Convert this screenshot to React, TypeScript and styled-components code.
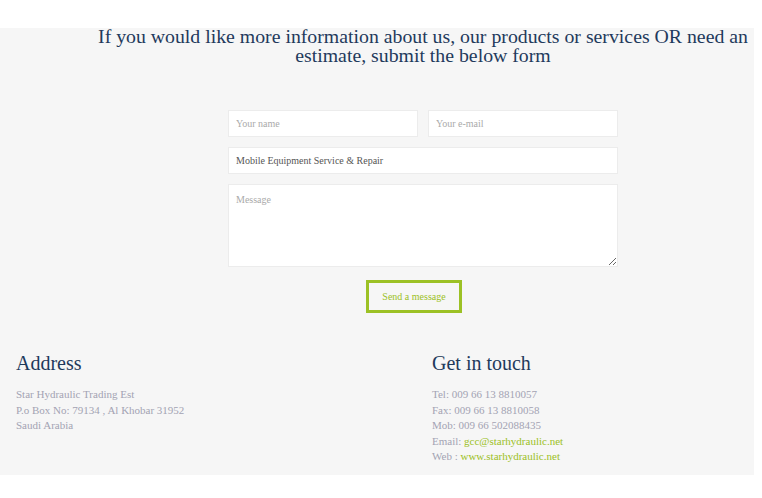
import React from "react";
import styled, { createGlobalStyle } from "styled-components";

const Global = createGlobalStyle`
  html, body { margin: 0; padding: 0; background: #fff; }
  body { font-family: "Liberation Serif", "DejaVu Serif", serif; }
  * { box-sizing: border-box; }
`;

const Page = styled.div`
  padding-top: 28px;
  width: 762px;
`;

const Section = styled.section`
  width: 754px;
  background: #f6f6f6;
  padding-bottom: 10px;
`;

const Intro = styled.h2`
  margin: 0;
  padding: 0 0 0 92px;
  text-align: center;
  font-weight: normal;
  font-size: 19.8px;
  line-height: 19px;
  color: #1f3a5c;
  position: relative;
  top: -1px;
`;

const FormWrap = styled.div`
  padding-left: 92px;
  margin-top: 44px;
  display: flex;
  justify-content: center;
`;

const Form = styled.form`
  width: 390px;
  display: flex;
  flex-direction: column;
  gap: 10px;
`;

const Row = styled.div`
  display: grid;
  grid-template-columns: 1fr 1fr;
  gap: 10px;
  width: 100%;
`;

const Input = styled.input`
  width: 100%;
  height: 27px;
  border: 1px solid #ececec;
  background: #fff;
  padding: 0 7px;
  font-family: "Liberation Serif", serif;
  font-size: 10px;
  color: #555;
  outline: none;
  &::placeholder { color: #aaa; }
`;

const TextArea = styled.textarea`
  width: 100%;
  height: 83px;
  border: 1px solid #ececec;
  background: #fff;
  padding: 9px 7px;
  font-family: "Liberation Serif", serif;
  font-size: 10px;
  color: #555;
  outline: none;
  resize: vertical;
  display: block;
  &::placeholder { color: #aaa; }
`;

const Button = styled.button`
  margin-top: 3px;
  margin-left: 138px;
  align-self: flex-start;
  width: 96px;
  height: 33px;
  border: 3px solid #9cc125;
  background: transparent;
  color: #9cc125;
  font-family: "Liberation Serif", serif;
  font-size: 10px;
  padding: 0;
  cursor: pointer;
`;

const Columns = styled.div`
  margin-top: 38px;
  display: grid;
  grid-template-columns: 416px 1fr;
`;

const Col = styled.div`
  padding-left: 16px;
`;

const ColTitle = styled.h3`
  margin: 0 0 12px;
  font-weight: normal;
  font-size: 20px;
  line-height: 24px;
  color: #1f3a5c;
`;

const Line = styled.div`
  font-size: 11px;
  line-height: 15.5px;
  color: #a3a3b3;
`;

const Link = styled.a`
  color: #9cc125;
  text-decoration: none;
`;

export default function App() {
  return (
    <Page>
      <Global />
      <Section>
        <Intro>
          If you would like more information about us, our products or services OR need an estimate, submit the below form
        </Intro>
        <FormWrap>
          <Form onSubmit={(e) => e.preventDefault()}>
            <Row>
              <Input placeholder="Your name" />
              <Input placeholder="Your e-mail" />
            </Row>
            <Input defaultValue="Mobile Equipment Service & Repair" />
            <TextArea placeholder="Message" />
            <Button type="submit">Send a message</Button>
          </Form>
        </FormWrap>
        <Columns>
          <Col>
            <ColTitle>Address</ColTitle>
            <Line>Star Hydraulic Trading Est</Line>
            <Line>P.o Box No: 79134 , Al Khobar 31952</Line>
            <Line>Saudi Arabia</Line>
          </Col>
          <Col>
            <ColTitle>Get in touch</ColTitle>
            <Line>Tel: 009 66 13 8810057</Line>
            <Line>Fax: 009 66 13 8810058</Line>
            <Line>Mob: 009 66 502088435</Line>
            <Line>
              Email: <Link href="#">gcc@starhydraulic.net</Link>
            </Line>
            <Line>
              Web : <Link href="#">www.starhydraulic.net</Link>
            </Line>
          </Col>
        </Columns>
      </Section>
    </Page>
  );
}
